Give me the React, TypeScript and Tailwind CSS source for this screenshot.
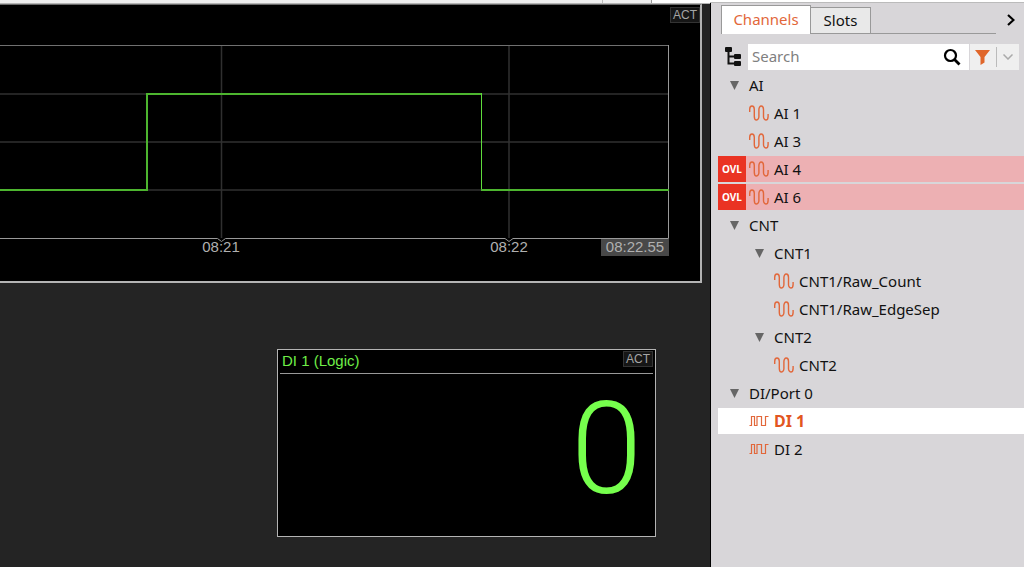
import React, { useState } from "react";

type Signal = "analog" | "digital";

interface TreeRow {
  id: string;
  name: string;
  indent: string;
  signal?: Signal;
  overload?: boolean;
}

const rows: TreeRow[] = [
  { id: "ai", name: "AI", indent: "pl-3" },
  { id: "ai1", name: "AI 1", indent: "pl-[3px]", signal: "analog" },
  { id: "ai3", name: "AI 3", indent: "pl-[3px]", signal: "analog" },
  { id: "ai4", name: "AI 4", indent: "pl-[3px]", signal: "analog", overload: true },
  { id: "ai6", name: "AI 6", indent: "pl-[3px]", signal: "analog", overload: true },
  { id: "cnt", name: "CNT", indent: "pl-3" },
  { id: "cnt1", name: "CNT1", indent: "pl-[37px]" },
  { id: "cnt1-raw", name: "CNT1/Raw_Count", indent: "pl-7", signal: "analog" },
  { id: "cnt1-edge", name: "CNT1/Raw_EdgeSep", indent: "pl-7", signal: "analog" },
  { id: "cnt2", name: "CNT2", indent: "pl-[37px]" },
  { id: "cnt2-ch", name: "CNT2", indent: "pl-7", signal: "analog" },
  { id: "di", name: "DI/Port 0", indent: "pl-3" },
  { id: "di1", name: "DI 1", indent: "pl-[3px]", signal: "digital" },
  { id: "di2", name: "DI 2", indent: "pl-[3px]", signal: "digital" },
];

const SignalIcon = ({ signal }: { signal: Signal }) => (
  <svg className="w-5 h-5 mr-[5px] shrink-0" viewBox="0 0 20 20" fill="none" stroke="#e2673a">
    {signal === "analog" ? (
      <path
        strokeWidth="1.4"
        d="M.7 9V6.500a2.300 3.500 0 0 1 4.600 0v7a2.300 3.500 0 0 0 4.600 0v-7a2.300 3.500 0 0 1 4.600 0v7a2.300 3.500 0 0 0 4.600 0V11"
      />
    ) : (
      <path
        strokeWidth="1.2"
        d="M.5 14.500h2v-9h3v9H8v-9h4.500v9h4v-9h3"
      />
    )}
  </svg>
);

const Triangle = () => (
  <svg className="w-[9px] h-[9px] mr-[10px] shrink-0" viewBox="0 0 9 9">
    <path d="M0 0h9L4.500 9z" fill="#666" />
  </svg>
);

const ActBadge = () => (
  <span className="h-4 px-[2px] border border-[#333] bg-[#161616] text-[#a5a5a5] text-xs leading-[14px]">
    ACT
  </span>
);

const TrendChart = () => (
  <section className="relative mr-2 bg-black border-t border-t-[#6a6a6a] border-r-2 border-b-2 border-[#b4b4b4]">
    <svg className="block w-full h-auto" viewBox="0 5 700 276" fontSize="15">
      {/* Grid */}
      <path d="M0 94h669M0 142h669M0 190h669M221.500 46v192M509 46v192" stroke="#303030" strokeWidth="1.500" fill="none" />
      {/* Frame with tick notches */}
      <path d="M0 45.500h669" stroke="#707070" />
      <path
        d="M668.500 45v193.500H513l-4 3-4-3H225.500l-4 3-4-3H0"
        stroke="#999"
        fill="none"
      />
      {/* Logic trace */}
      <path d="M0 190h147V94h334" stroke="#4db52f" strokeWidth="2" fill="none" />
      <path d="M481.500 93v97" stroke="#5fdc3c" fill="none" />
      <path d="M481 190h188" stroke="#4db52f" strokeWidth="2" fill="none" />
      {/* Time axis */}
      <text x="221" y="252" textAnchor="middle" fill="#b0b0b0">08:21</text>
      <text x="509" y="252" textAnchor="middle" fill="#b0b0b0">08:22</text>
      <rect x="601" y="239" width="68" height="17" fill="#484848" />
      <text x="635" y="252" textAnchor="middle" fill="#b0b0b0">08:22.55</text>
    </svg>
    <div className="absolute top-[2px] right-0 flex">
      <ActBadge />
    </div>
  </section>
);

const DigitalMeter = () => (
  <section className="self-end w-[379px] h-[188px] mt-[66px] mr-[54px] px-[2px] bg-black border border-[#b4b4b4]">
    <header className="flex justify-between items-start h-6 pt-px border-b border-[#999]">
      <h2 className="pl-[2px] text-[15px] leading-5 text-[#6fee48]">DI 1 (Logic)</h2>
      <ActBadge />
    </header>
    <p className="pr-[11px] pt-[11px] text-right font-['Roboto'] font-light text-[128px] leading-[128px] text-[#76ff4d]">0</p>
  </section>
);

const ChannelTree = () => {
  const [selected, setSelected] = useState("di1");

  return (
    <ul className="flex flex-col gap-[2px] mt-[2px] ml-[7px]">
      {rows.map((row) => {
        const active = row.id === selected;
        return (
          <li key={row.id} className={row.overload ? "bg-[#edb0b3]" : active ? "bg-white" : ""}>
            <button
              type="button"
              onClick={() => setSelected(row.id)}
              className={`flex items-center w-full h-[26px] text-left ${
                active ? "text-base font-bold text-[#e2561f]" : "text-[15px] text-[#111]"
              }`}
            >
              {row.overload && (
                <span className="w-7 h-[26px] shrink-0 bg-[#ea3323] text-white text-[10px] leading-[26px] font-bold text-center">
                  OVL
                </span>
              )}
              {row.signal && !row.overload && <span className="w-7 shrink-0" />}
              <span className={`flex items-center ${row.indent}`}>
                {row.signal ? <SignalIcon signal={row.signal} /> : <Triangle />}
                {row.name}
              </span>
            </button>
          </li>
        );
      })}
    </ul>
  );
};

const ChannelPanel = () => {
  const [tab, setTab] = useState("Channels");

  return (
    <aside className="flex flex-col w-[314px] shrink-0 font-['Noto_Sans',sans-serif]">
      <div className="h-[3px] shrink-0 bg-white border-b border-[#bbb]" />
      <div className="flex-1 border-l border-black bg-[#d8d6d9]">
        {/* Tabs */}
        <div className="flex items-end pl-[10px] pt-[2px]">
          <div className="flex flex-1 items-end border-b border-[#999]">
            {["Channels", "Slots"].map((name) => (
              <button
                key={name}
                type="button"
                onClick={() => setTab(name)}
                className={`border-t border-r border-[#999] text-[15px] ${
                  tab === name
                    ? "-mb-px w-[90px] h-[29px] pb-[2px] border-l bg-white text-[#e2673a]"
                    : "w-[60px] h-[26px] bg-[#e9e9e9] text-[#111]"
                }`}
              >
                {name}
              </button>
            ))}
          </div>
          <button type="button" aria-label="Collapse panel" className="w-7 h-7 pl-[11px]">
            <svg className="w-2 h-3" viewBox="0 0 8 12" fill="none" stroke="#000" strokeWidth="2.200">
              <path d="M1 1l5.500 5L1 11" />
            </svg>
          </button>
        </div>

        {/* Search */}
        <div className="flex items-center h-[26px] mt-[10px] pl-[14px] pr-[5px]">
          <button type="button" aria-label="Tree view" className="w-[23px] shrink-0">
            <svg className="w-4 h-5" viewBox="0 0 16 20">
              <g fill="#111">
                <rect x="0" y="0" width="7" height="5" rx="1" />
                <rect x="9" y="7" width="7" height="5" rx="1" />
                <rect x="9" y="14" width="7" height="5" rx="1" />
              </g>
              <path d="M3.500 4v12.500H10M3.500 9.500H10" stroke="#111" strokeWidth="2" fill="none" />
            </svg>
          </button>
          <div className="flex flex-1 min-w-0 items-center h-[26px] bg-white">
            <input
              type="text"
              aria-label="Search"
              placeholder="Search"
              className="flex-1 min-w-0 pl-[4px] pb-[2px] text-[15px] leading-6 placeholder:text-[#808080] outline-none"
            />
            <button type="button" aria-label="Run search" className="w-[26px] h-5 shrink-0">
              <svg className="w-[18px] h-[18px]" viewBox="0 0 18 18" fill="none" stroke="#000">
                <circle cx="7.500" cy="7.500" r="5.500" strokeWidth="2.200" />
                <path d="M11.500 11.500l5 5" strokeWidth="2.800" />
              </svg>
            </button>
          </div>
          <div className="flex items-center w-[49px] h-[26px] ml-px shrink-0 bg-[#efefef]">
            <button type="button" aria-label="Filter" className="w-[27px] h-5 pl-[5px] border-r border-[#bbb]">
              <svg className="w-[15px] h-[15px]" viewBox="0 0 15 15">
                <path d="M0 0h15L9.500 7v5.500L5.500 15V7z" fill="#e0662a" />
              </svg>
            </button>
            <button type="button" aria-label="Filter options" className="flex flex-1 items-center h-5 pl-[6px]">
              <svg className="w-[10px] h-[6px]" viewBox="0 0 10 6" fill="none" stroke="#aaa" strokeWidth="1.500">
                <path d="M.5.5L5 5 9.500.5" />
              </svg>
            </button>
          </div>
        </div>

        <ChannelTree />
      </div>
    </aside>
  );
};

export default function App() {
  return (
    <div className="flex min-h-screen font-['Liberation_Sans',Arial,sans-serif]">
      <main className="flex flex-col flex-1 min-w-0 bg-[#242424]">
        {/* Lower edge of the toolbar */}
        <div className="flex h-1 shrink-0 border-b border-[#b4b4b4]">
          <div className="flex-1 bg-[#efefef] border-r border-[#bbb]" />
          <div className="w-[49px] bg-[#efefef] border-r border-[#999]" />
          <div className="w-[58px] bg-white" />
        </div>
        <TrendChart />
        <DigitalMeter />
      </main>
      <ChannelPanel />
    </div>
  );
}
